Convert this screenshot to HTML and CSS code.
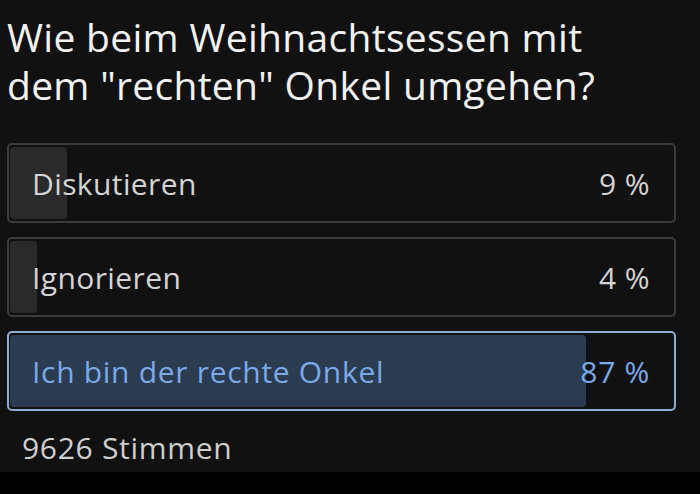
FILE: index.html
```html
<!DOCTYPE html>
<html lang="de">
<head>
<meta charset="utf-8">
<link rel="stylesheet" href="styles.css">
</head>
<body>
<main class="poll">
  <h1 class="question">Wie beim Weihnachtsessen mit dem "rechten" Onkel umgehen?</h1>
  <div class="options">
    <div class="option">
      <div class="fill" style="width: 8.6%"></div>
      <span class="label">Diskutieren</span>
      <span class="pct">9 %</span>
    </div>
    <div class="option">
      <div class="fill" style="width: 4.1%"></div>
      <span class="label">Ignorieren</span>
      <span class="pct">4 %</span>
    </div>
    <div class="option selected">
      <div class="fill" style="width: 86.6%"></div>
      <span class="label">Ich bin der rechte Onkel</span>
      <span class="pct">87 %</span>
    </div>
  </div>
  <div class="votes">9626 Stimmen</div>
</main>
<div class="bottom-bar"></div>
</body>
</html>
```

FILE: styles.css
```css
html, body {
  margin: 0;
  padding: 0;
  background: #000;
  width: 700px;
  height: 494px;
  overflow: hidden;
  font-family: "Open Sans", "Noto Sans", sans-serif;
}

.poll {
  background: #111111;
  height: 472px;
  box-sizing: border-box;
  padding: 13px 24px 0 7px;
  display: flex;
  flex-direction: column;
}

.question {
  margin: 0;
  font-size: 39px;
  line-height: 48px;
  font-weight: 400;
  color: #f2f2f2;
  letter-spacing: 0.3px;
  width: 610px;
}

.options {
  margin-top: 34px;
  display: flex;
  flex-direction: column;
  gap: 14px;
}

.option {
  position: relative;
  height: 80px;
  box-sizing: border-box;
  border: 2px solid #3b3b3b;
  border-radius: 5px;
  display: flex;
  align-items: center;
  justify-content: space-between;
  font-size: 30px;
  letter-spacing: 0.4px;
  color: #d4d4d4;
}

.fill {
  position: absolute;
  left: 1px;
  top: 2px;
  bottom: 2px;
  background: #2a2a2a;
  border-radius: 4px;
}

.label, .pct {
  position: relative;
}

.label {
  padding-left: 23px;
}

.pct {
  padding-right: 24px;
}

.selected {
  border-color: #8badd6;
  color: #7aa9e8;
  font-weight: 500;
  letter-spacing: 0.7px;
}

.selected .fill {
  background: #2b3b50;
}

.votes {
  margin-top: 16px;
  padding-left: 15px;
  font-size: 30px;
  letter-spacing: 0.7px;
  color: #cfcfcf;
}

.bottom-bar {
  height: 22px;
  background: #000;
}
```
